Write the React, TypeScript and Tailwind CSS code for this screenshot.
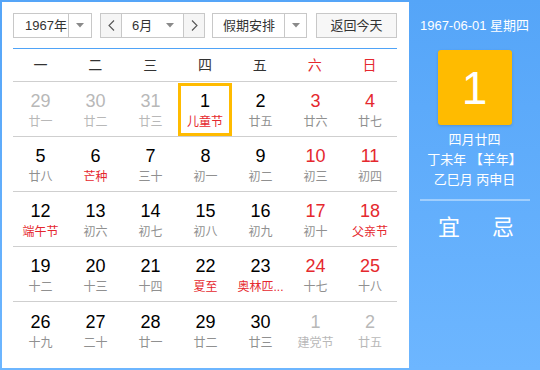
import React from "react";

type Cell = { d: number; l: string; other?: boolean; redNum?: boolean; redL?: boolean; sel?: boolean };

const rows: Cell[][] = [
  [
    { d: 29, l: "廿一", other: true },
    { d: 30, l: "廿二", other: true },
    { d: 31, l: "廿三", other: true },
    { d: 1, l: "儿童节", redL: true, sel: true },
    { d: 2, l: "廿五" },
    { d: 3, l: "廿六", redNum: true },
    { d: 4, l: "廿七", redNum: true },
  ],
  [
    { d: 5, l: "廿八" },
    { d: 6, l: "芒种", redL: true },
    { d: 7, l: "三十" },
    { d: 8, l: "初一" },
    { d: 9, l: "初二" },
    { d: 10, l: "初三", redNum: true },
    { d: 11, l: "初四", redNum: true },
  ],
  [
    { d: 12, l: "端午节", redL: true },
    { d: 13, l: "初六" },
    { d: 14, l: "初七" },
    { d: 15, l: "初八" },
    { d: 16, l: "初九" },
    { d: 17, l: "初十", redNum: true },
    { d: 18, l: "父亲节", redNum: true, redL: true },
  ],
  [
    { d: 19, l: "十二" },
    { d: 20, l: "十三" },
    { d: 21, l: "十四" },
    { d: 22, l: "夏至", redL: true },
    { d: 23, l: "奥林匹...", redL: true },
    { d: 24, l: "十七", redNum: true },
    { d: 25, l: "十八", redNum: true },
  ],
  [
    { d: 26, l: "十九" },
    { d: 27, l: "二十" },
    { d: 28, l: "廿一" },
    { d: 29, l: "廿二" },
    { d: 30, l: "廿三" },
    { d: 1, l: "建党节", other: true },
    { d: 2, l: "廿五", other: true },
  ],
];

const weekdays = ["一", "二", "三", "四", "五", "六", "日"];

function Caret() {
  return (
    <svg width="8" height="5" viewBox="0 0 8 5">
      <path d="M0 0 L8 0 L4 4.5 Z" fill="#8a8a8a" />
    </svg>
  );
}

function Chevron({ dir }: { dir: "l" | "r" }) {
  return (
    <svg width="7" height="11" viewBox="0 0 7 11">
      <path
        d={dir === "l" ? "M6 0.5 L1 5.5 L6 10.5" : "M1 0.5 L6 5.5 L1 10.5"}
        fill="none"
        stroke="#555"
        strokeWidth="1.1"
      />
    </svg>
  );
}

export default function App() {
  const font = { fontFamily: '"Liberation Sans", "Noto Sans CJK SC", sans-serif' };
  return (
    <div
      className="w-[540px] h-[370px] flex bg-gradient-to-b from-[#55a5f8] to-[#6db6ff] text-[#333]"
      style={font}
    >
      <div className="w-[407px] ml-[2px] mt-[2px] mb-[2px] bg-white pl-[11px] pr-[10px] pt-[11px]">
        {/* controls */}
        <div className="flex h-[25px] text-[13px] leading-none">
          <div className="w-[79px] flex border border-[#c8c8c8] bg-white">
            <div className="w-[54px] flex items-center pl-[11px]">1967年</div>
            <div className="flex-1 border-l border-[#c8c8c8] flex items-center justify-center">
              <Caret />
            </div>
          </div>
          <div className="ml-[8px] w-[105px] flex border border-[#c8c8c8]">
            <div className="w-[21px] bg-[#f5f5f5] flex items-center justify-center border-r border-[#c8c8c8]">
              <Chevron dir="l" />
            </div>
            <div className="w-[61px] flex items-center pl-[10px] pr-[9px] justify-between bg-white">
              <span>6月</span>
              <Caret />
            </div>
            <div className="flex-1 bg-[#f5f5f5] flex items-center justify-center border-l border-[#c8c8c8]">
              <Chevron dir="r" />
            </div>
          </div>
          <div className="ml-[7px] w-[95px] flex border border-[#c8c8c8] bg-white">
            <div className="w-[71px] flex items-center pl-[10px]">假期安排</div>
            <div className="flex-1 border-l border-[#c8c8c8] flex items-center justify-center">
              <Caret />
            </div>
          </div>
          <div className="ml-[9px] w-[81px] flex items-center justify-center border border-[#c8c8c8] bg-[#f7f7f7]">
            返回今天
          </div>
        </div>
        {/* blue line */}
        <div className="mt-[10px] w-[384px] h-[1px] bg-[#4fa3f7]" />
        {/* weekday header */}
        <div className="w-[384px] grid grid-cols-7 h-[33px] border-b border-[#cfcfcf] items-center text-[14px]">
          {weekdays.map((w, i) => (
            <div key={w} className={`text-center ${i >= 5 ? "text-[#e5282e]" : "text-[#333]"}`}>
              {w}
            </div>
          ))}
        </div>
        {/* rows */}
        {rows.map((r, ri) => (
          <div
            key={ri}
            className={`w-[384px] grid grid-cols-[55px_55px_55px_55px_55px_55px_54px] h-[55px] ${
              ri < rows.length - 1 ? "border-b border-[#cfcfcf]" : ""
            }`}
          >
            {r.map((c, ci) => (
              <div
                key={ci}
                className={`flex flex-col items-center justify-center ${
                  c.sel ? "border-[3px] border-[#ffbb00] mt-[1px] mr-[1px]" : ""
                }`}
              >
                <div
                  className={`text-[18px] leading-[20px] ${
                    c.other ? "text-[#b8b8b8]" : c.redNum ? "text-[#e5282e]" : "text-black"
                  } ${c.sel ? "mt-[1px]" : "mt-[3px]"}`}
                >
                  {c.d}
                </div>
                <div
                  className={`text-[12px] leading-[16px] mt-[3px] whitespace-nowrap ${
                    c.redL ? "text-[#e5282e]" : c.other ? "text-[#b8b8b8]" : "text-[#909090]"
                  }`}
                >
                  {c.l}
                </div>
              </div>
            ))}
          </div>
        ))}
      </div>
      {/* right panel */}
      <div className="flex-1 flex flex-col items-center text-white">
        <div className="mt-[17px] text-[13px] leading-[18px]">1967-06-01 星期四</div>
        <div className="mt-[15px] w-[74px] h-[75px] rounded-[3px] bg-[#ffbb00] shadow-[0_1px_3px_rgba(0,0,0,0.15)] flex items-center justify-center text-[46px] leading-none">
          1
        </div>
        <div className="mt-[5px] text-[13px] leading-[20px] flex flex-col items-center">
          <div>四月廿四</div>
          <div>丁未年 【羊年】</div>
          <div>乙巳月 丙申日</div>
        </div>
        <div className="mt-[9px] w-[110px] h-[2px] bg-white/40" />
        <div className="mt-[14px] flex gap-[32px] text-[22px] leading-[26px] ml-[3px]">
          <span>宜</span>
          <span>忌</span>
        </div>
      </div>
    </div>
  );
}
